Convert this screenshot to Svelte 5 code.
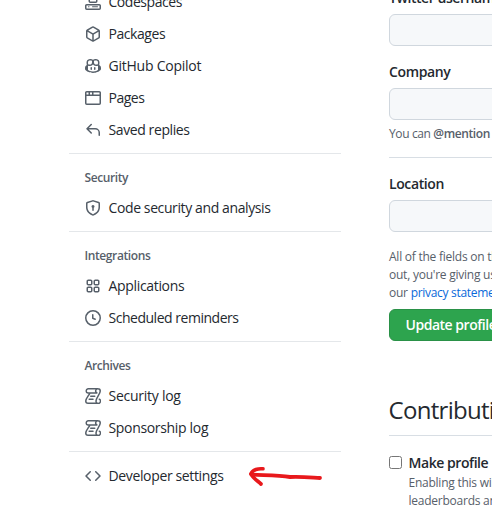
<script>
  const icons = {
    codespaces: "M3.5 3.75C3.5 2.784 4.284 2 5.25 2h5.5c.966 0 1.75.784 1.75 1.75v3.5A1.75 1.75 0 0 1 10.75 9h-5.5A1.75 1.75 0 0 1 3.5 7.25v-3.5Zm1.75-.25a.25.25 0 0 0-.25.25v3.5c0 .138.112.25.25.25h5.5a.25.25 0 0 0 .25-.25v-3.5a.25.25 0 0 0-.25-.25h-5.5ZM0 11.75C0 10.784.784 10 1.75 10h12.5c.966 0 1.75.784 1.75 1.75v2.5A1.75 1.75 0 0 1 14.25 16H1.75A1.75 1.75 0 0 1 0 14.25v-2.5Zm1.75-.25a.25.25 0 0 0-.25.25v2.5c0 .138.112.25.25.25h12.5a.25.25 0 0 0 .25-.25v-2.5a.25.25 0 0 0-.25-.25H1.75ZM7 12.75a.5.5 0 0 1 .5-.5h5a.5.5 0 0 1 0 1h-5a.5.5 0 0 1-.5-.5Zm-4 0a.5.5 0 0 1 .5-.5h.5a.5.5 0 0 1 0 1h-.5a.5.5 0 0 1-.5-.5Z",
    packages: "M8.878.392a1.75 1.75 0 0 0-1.756 0l-5.25 3.045A1.75 1.75 0 0 0 1 4.951v6.098c0 .624.332 1.2.872 1.514l5.25 3.045a1.75 1.75 0 0 0 1.756 0l5.25-3.045c.54-.313.872-.89.872-1.514V4.951c0-.624-.332-1.2-.872-1.514L8.878.392ZM7.875 1.69a.25.25 0 0 1 .25 0l4.63 2.685L8 7.133 3.245 4.375l4.63-2.685ZM2.5 5.677v5.372c0 .09.047.171.125.216l4.625 2.683V8.432L2.5 5.677Zm6.25 8.271 4.625-2.683a.25.25 0 0 0 .125-.216V5.677L8.75 8.432v5.516Z",
    copilot: "M6.25 9a.75.75 0 0 1 .75.75v1.5a.75.75 0 0 1-1.5 0v-1.5A.75.75 0 0 1 6.25 9Zm4.25.75a.75.75 0 0 0-1.5 0v1.5a.75.75 0 0 0 1.5 0v-1.5ZM7.86 1.77c.05.053.097.107.14.164.043-.057.09-.111.14-.164.681-.731 1.737-.9 2.943-.765 1.23.136 2.145.527 2.724 1.26.566.716.693 1.614.693 2.485 0 .572-.053 1.147-.254 1.655l.168.838.066.033A2.75 2.75 0 0 1 16 9.736V11c0 .24-.086.438-.156.567a2.173 2.173 0 0 1-.259.366c-.18.21-.404.413-.605.58a10.19 10.19 0 0 1-.792.597l-.015.01-.006.004-.028.018a8.832 8.832 0 0 1-.456.281c-.307.177-.749.41-1.296.642C11.296 14.528 9.756 15 8 15c-1.756 0-3.296-.472-4.387-.935a12.28 12.28 0 0 1-1.296-.641 8.815 8.815 0 0 1-.456-.281l-.028-.02-.006-.003-.015-.01a7.077 7.077 0 0 1-.235-.166c-.15-.108-.352-.26-.557-.431a5.19 5.19 0 0 1-.605-.58 2.167 2.167 0 0 1-.259-.366A1.19 1.19 0 0 1 0 11V9.736a2.75 2.75 0 0 1 1.52-2.46l.067-.033.167-.838C1.553 5.897 1.5 5.322 1.5 4.75c0-.87.127-1.77.693-2.485.579-.733 1.494-1.124 2.724-1.26 1.206-.134 2.262.034 2.944.765ZM3.024 7.709 3 7.824v4.261c.02.013.043.025.065.038.264.152.65.356 1.134.562.972.412 2.307.815 3.801.815 1.494 0 2.83-.403 3.8-.815A10.6 10.6 0 0 0 13 12.085V7.824l-.023-.115c-.49.21-1.075.291-1.727.291-1.146 0-2.06-.328-2.71-.991A3.233 3.233 0 0 1 8 6.266a3.24 3.24 0 0 1-.54.743C6.81 7.672 5.896 8 4.75 8c-.652 0-1.237-.082-1.727-.291ZM6.762 2.83c-.193-.206-.637-.413-1.682-.297-1.019.113-1.479.404-1.713.7-.247.312-.369.789-.369 1.554 0 .793.129 1.171.308 1.371.162.181.519.379 1.442.379.853 0 1.339-.235 1.638-.54.315-.322.527-.827.617-1.553.117-.935-.037-1.395-.241-1.614Zm4.155-.297c-1.044-.116-1.488.091-1.681.297-.204.219-.359.679-.242 1.614.091.726.303 1.231.618 1.553.299.305.784.54 1.638.54.922 0 1.28-.198 1.442-.379.179-.2.308-.578.308-1.371 0-.765-.123-1.242-.37-1.554-.233-.296-.693-.587-1.713-.7Z",
    browser: "M0 2.75C0 1.784.784 1 1.75 1h12.5c.966 0 1.75.784 1.75 1.75v10.5A1.75 1.75 0 0 1 14.25 15H1.75A1.75 1.75 0 0 1 0 13.25ZM14.5 6h-13v7.25c0 .138.112.25.25.25h12.5a.25.25 0 0 0 .25-.25Zm-6-3.5v2h6V2.75a.25.25 0 0 0-.25-.25ZM5 2.5v2h2v-2Zm-3.25 0a.25.25 0 0 0-.25.25V4.5h2v-2Z",
    reply: "M6.78 1.97a.75.75 0 0 1 0 1.06L3.81 6h6.44A4.75 4.75 0 0 1 15 10.75v2.5a.75.75 0 0 1-1.5 0v-2.5a3.25 3.25 0 0 0-3.25-3.25H3.81l2.97 2.97a.749.749 0 0 1-1.06 1.06L1.47 7.28a.75.75 0 0 1 0-1.06l4.25-4.25a.75.75 0 0 1 1.06 0Z",
    shield: "m8.533.133 5.25 1.68A1.75 1.75 0 0 1 15 3.48V7c0 1.566-.32 3.182-1.303 4.682-.983 1.498-2.585 2.813-5.032 3.855a1.697 1.697 0 0 1-1.33 0c-2.447-1.042-4.049-2.357-5.032-3.855C1.32 10.182 1 8.566 1 7V3.48a1.75 1.75 0 0 1 1.217-1.667l5.25-1.68a1.748 1.748 0 0 1 1.066 0Zm-.61 1.429-5.25 1.68a.25.25 0 0 0-.173.238V7c0 1.358.275 2.666 1.057 3.86.784 1.194 2.121 2.34 4.366 3.297a.196.196 0 0 0 .154 0c2.245-.956 3.582-2.104 4.366-3.298C13.225 9.666 13.5 8.36 13.5 7V3.48a.25.25 0 0 0-.174-.238l-5.25-1.68a.25.25 0 0 0-.153 0ZM9.5 6.5c0 .536-.286 1.032-.75 1.3v2.45a.75.75 0 0 1-1.5 0V7.8A1.5 1.5 0 1 1 9.5 6.5Z",
    apps: "M1.5 3.25c0-.966.784-1.75 1.75-1.75h2.5c.966 0 1.75.784 1.75 1.75v2.5A1.75 1.75 0 0 1 5.75 7.5h-2.5A1.75 1.75 0 0 1 1.5 5.75Zm7 0c0-.966.784-1.75 1.75-1.75h2.5c.966 0 1.75.784 1.75 1.75v2.5a1.75 1.75 0 0 1-1.75 1.75h-2.5A1.75 1.75 0 0 1 8.5 5.75Zm-7 7c0-.966.784-1.75 1.75-1.75h2.5c.966 0 1.75.784 1.75 1.75v2.5a1.75 1.75 0 0 1-1.75 1.75h-2.5a1.75 1.75 0 0 1-1.75-1.75Zm7 0c0-.966.784-1.75 1.75-1.75h2.5c.966 0 1.75.784 1.75 1.75v2.5a1.75 1.75 0 0 1-1.75 1.75h-2.5a1.75 1.75 0 0 1-1.75-1.75ZM3.25 3a.25.25 0 0 0-.25.25v2.5c0 .138.112.25.25.25h2.5A.25.25 0 0 0 6 5.75v-2.5A.25.25 0 0 0 5.75 3Zm7 0a.25.25 0 0 0-.25.25v2.5c0 .138.112.25.25.25h2.5a.25.25 0 0 0 .25-.25v-2.5a.25.25 0 0 0-.25-.25Zm-7 7a.25.25 0 0 0-.25.25v2.5c0 .138.112.25.25.25h2.5a.25.25 0 0 0 .25-.25v-2.5a.25.25 0 0 0-.25-.25Zm7 0a.25.25 0 0 0-.25.25v2.5c0 .138.112.25.25.25h2.5a.25.25 0 0 0 .25-.25v-2.5a.25.25 0 0 0-.25-.25Z",
    clock: "M8 0a8 8 0 1 1 0 16A8 8 0 0 1 8 0ZM1.5 8a6.5 6.5 0 1 0 13 0 6.5 6.5 0 0 0-13 0Zm7-3.25v2.992l2.028.812a.75.75 0 0 1-.557 1.392l-2.5-1A.751.751 0 0 1 7 8.25v-3.5a.75.75 0 0 1 1.5 0Z",
    code: "m11.28 3.22 4.25 4.25a.75.75 0 0 1 0 1.06l-4.25 4.25a.749.749 0 0 1-1.275-.326.749.749 0 0 1 .215-.734L13.94 8l-3.72-3.72a.749.749 0 0 1 .326-1.275.749.749 0 0 1 .734.215Zm-6.56 0a.751.751 0 0 1 1.042.018.751.751 0 0 1 .018 1.042L2.06 8l3.72 3.72a.749.749 0 0 1-.326 1.275.749.749 0 0 1-.734-.215L.47 8.53a.75.75 0 0 1 0-1.06Z"
  };

  const groups = [
    { items: [
      { icon: "codespaces", label: "Codespaces", tracking: -0.45 },
      { icon: "packages", label: "Packages", tracking: -0.44 },
      { icon: "copilot", label: "GitHub Copilot", tracking: -0.24 },
      { icon: "browser", label: "Pages", tracking: -0.48 },
      { icon: "reply", label: "Saved replies", tracking: -0.4 }
    ] },
    { title: "Security", items: [{ icon: "shield", label: "Code security and analysis", tracking: -0.39 }] },
    { title: "Integrations", items: [
      { icon: "apps", label: "Applications", tracking: -0.33 },
      { icon: "clock", label: "Scheduled reminders", tracking: -0.48 }
    ] },
    { title: "Archives", items: [
      { icon: "log", label: "Security log", tracking: -0.26 },
      { icon: "log", label: "Sponsorship log", tracking: -0.33 }
    ] },
    { items: [{ icon: "code", label: "Developer settings", tracking: -0.36 }] }
  ];
</script>

<div class="page">
  <nav>
    {#each groups as group}
      <section>
        {#if group.title}<h3>{group.title}</h3>{/if}
        {#each group.items as item}
          <a href="#top">
            <svg width="16" height="16" viewBox="0 0 16 16">
              {#if item.icon === "log"}
                <path class="line" d="M10.9 5H3A2.15 2.15 0 0 1 3 .75H13A2.25 2.25 0 0 1 15.25 3C15.25 6 11 9.8 11 13A2.25 2.25 0 1 0 14.3 11.2M13 .75A2.25 2.25 0 0 0 11.9 5M4.9 5C4 7.5.75 10.4.75 13A2.25 2.25 0 0 0 3 15.25H13M5.75 8.25H9.75M4.2 11.25H8" />
              {:else}
                <path fill-rule="evenodd" d={icons[item.icon]} />
              {/if}
            </svg>
            <span style:letter-spacing="{item.tracking}px">{item.label}</span>
          </a>
        {/each}
      </section>
    {/each}
  </nav>

  <main>
    <div class="label">Twitter username</div>
    <div class="input"></div>
    <div class="label company">Company</div>
    <div class="input"></div>
    <div class="note hint">You can <b>@mention</b> your company</div>
    <div class="label location">Location</div>
    <div class="input"></div>
    <div class="note privacy">
      <div>All of the fields on this page</div>
      <div>out, you're giving us consent</div>
      <div>our <span class="link">privacy statement</span></div>
    </div>
    <button>Update profile</button>
    <h2>Contributions</h2>
    <div class="option">
      <span class="check"></span>
      <div>
        <div class="label option-label">Make profile private</div>
        <div class="note">
          <div>Enabling this will hide</div>
          <div>leaderboards and</div>
        </div>
      </div>
    </div>
  </main>

  <svg class="arrow" width="78" height="24" viewBox="0 0 78 24">
    <path d="M15 4.8C10.5 4.3 4.5 5.5 3 10" stroke-width="3.6" />
    <path d="M3 10C5 14 9 16.500 13 20" stroke-width="3.8" />
    <path d="M4 10.7C22 11.5 31 11.5 42 13C54 12.5 63 13.500 72 14" stroke-width="3.8" />
  </svg>
</div>

<style>
  :global(body) { background: #fff; overflow: hidden; }
  .page {
    position: relative;
    display: flex;
    width: 492px;
    height: 508px;
    overflow: hidden;
    background: #fff;
    color: #24292f;
    font: 14px/20px "Open Sans", "Noto Sans", sans-serif;
  }
  nav { width: 272px; margin: -14px 0 0 69px; flex: none; }
  section + section { border-top: 1px solid #e4e7ea; margin-top: 7px; padding-top: 8px; }
  h3 {
    margin: 0;
    padding: 6px 0 4px 15.5px;
    font-size: 12px;
    line-height: 20px;
    font-weight: 600;
    letter-spacing: -0.4px;
    color: #57606a;
  }
  a {
    display: flex;
    align-items: center;
    gap: 7.5px;
    height: 32px;
    padding-left: 16px;
    color: #24292f;
    text-decoration: none;
    white-space: nowrap;
  }
  a svg { fill: #57606a; flex: none; }
  .line { fill: none; stroke: #57606a; stroke-width: 1.5; stroke-linecap: round; stroke-linejoin: round; }
  main { width: 300px; margin: -12px 0 0 48px; flex: none; white-space: nowrap; }
  .label { font-weight: 600; line-height: 20px; letter-spacing: -0.44px; }
  .input {
    box-sizing: border-box;
    height: 32px;
    margin-top: 6px;
    border: 1px solid #d0d7de;
    border-radius: 6px;
    background: #f6f8fa;
  }
  .company { margin-top: 16px; letter-spacing: -0.36px; }
  .note { font-size: 12px; line-height: 18px; color: #57606a; letter-spacing: -0.24px; }
  .note b { font-weight: 600; }
  .hint { margin-top: 5px; padding-bottom: 14px; border-bottom: 1px solid #d8dee4; letter-spacing: -0.38px; }
  .location { margin-top: 16px; letter-spacing: -0.4px; }
  .privacy { margin-top: 16px; }
  .link { color: #0969da; letter-spacing: -0.3px; }
  button {
    display: block;
    box-sizing: border-box;
    width: 126px;
    height: 32px;
    margin-top: 7px;
    padding: 0 15.5px;
    border: 1px solid #2a9147;
    border-radius: 6px;
    background: #2da44e;
    color: #fff;
    font: 600 14px/20px "Open Sans", "Noto Sans", sans-serif;
    letter-spacing: -0.48px;
    white-space: nowrap;
    text-align: left;
  }
  h2 {
    margin: 52px 0 0 0;
    padding-bottom: 9px;
    border-bottom: 1px solid #d8dee4;
    font-size: 24px;
    line-height: 33px;
    font-weight: 400;
    letter-spacing: -0.7px;
    text-indent: -0.5px;
  }
  .option { display: flex; gap: 6.5px; margin-top: 18px; }
  .check {
    box-sizing: border-box;
    width: 13px;
    height: 13px;
    margin-top: 2px;
    border: 1px solid #767676;
    border-radius: 2.5px;
    flex: none;
  }
  .option-label { margin-top: -1px; margin-bottom: 1px; }
  .arrow { position: absolute; left: 247.5px; top: 464px; fill: none; stroke: #e8191c; stroke-linecap: round; stroke-linejoin: round; }
</style>
